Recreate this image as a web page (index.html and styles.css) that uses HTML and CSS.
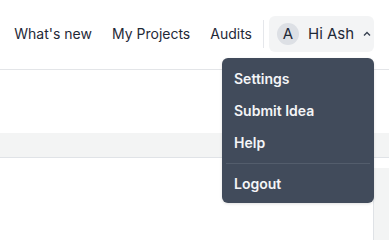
FILE: index.html
```html
<!doctype html>
<html lang="en">
  <head>
    <meta name="viewport" content="width=device-width">
    <title>Dashboard</title>

    <link rel="stylesheet" href="styles.css">
  </head>
  <body>
    <header id="top">
      <nav class="links">
        <a href="#">What's new</a>
        <a href="#">My Projects</a>
        <a href="#">Audits</a>
      </nav>
      <div class="sep"></div>
      <div class="user">
        <button class="user-btn">
          <span class="avatar">A</span>
          <span class="hi">Hi Ash</span>
          <svg class="chev" width="8" height="6" viewBox="0 0 8 6"><path d="M1 4.5 L4 1.5 L7 4.5" fill="none" stroke="#374151" stroke-width="1.4"/></svg>
        </button>
        <ul class="menu">
          <li><a href="#">Settings</a></li>
          <li><a href="#">Submit Idea</a></li>
          <li><a href="#">Help</a></li>
          <li class="divider"></li>
          <li><a href="#">Logout</a></li>
        </ul>
      </div>
    </header>

    <div class="gap"></div>
    <div class="band"></div>
    <main id="content">
      <div class="body"></div>
      <aside class="side"></aside>
    </main>
  </body>
</html>
```

FILE: styles.css
```css
* { box-sizing: border-box; }

html, body {
  margin: 0;
  font-family: Inter, "Noto Sans", sans-serif;
  font-size: 14px;
  color: #1f2937;
  background: #fff;
}

a { color: inherit; text-decoration: none; }

#top {
  height: 70px;
  display: flex;
  align-items: center;
  justify-content: flex-end;
  padding: 0 15px 2px 0;
  border-bottom: 1px solid #e3e5e8;
}

.links {
  display: flex;
  gap: 20px;
  margin-right: 11px;
}

.sep {
  width: 1px;
  height: 28px;
  background: #e5e7eb;
  margin-right: 5px;
}

.user { position: relative; }

.user-btn {
  display: flex;
  align-items: center;
  height: 36px;
  width: 105px;
  padding: 0 0 0 8px;
  border: none;
  border-radius: 6px;
  background: #f3f4f5;
  font: inherit;
  color: inherit;
  cursor: pointer;
}

.avatar {
  width: 22px;
  height: 22px;
  border-radius: 50%;
  background: #dde0e5;
  display: flex;
  align-items: center;
  justify-content: center;
  font-size: 15px;
  margin-right: 9px;
}

.hi { font-size: 15px; margin-right: 9px; }

.menu {
  position: absolute;
  top: 42px;
  right: 0;
  width: 152px;
  margin: 0;
  padding: 5px 0 3px;
  list-style: none;
  background: #414b5b;
  border-radius: 6px;
  box-shadow: 0 1px 3px rgba(0, 0, 0, 0.12);
  z-index: 10;
}

.menu a {
  display: block;
  height: 32px;
  line-height: 32px;
  padding: 0 12px;
  color: #f4f5f7;
  font-weight: 600;
}

.divider {
  height: 1px;
  margin: 4px 4px;
  background: #535d6c;
}

.gap { height: 63px; }

.band {
  height: 25px;
  background: #f3f4f4;
  border-bottom: 1px solid #e0e3e7;
}

#content {
  display: flex;
  padding-top: 10px;
}

.body { flex: 1; height: 80px; }

.side {
  width: 16px;
  height: 80px;
  background: #f3f4f4;
  border-left: 1px solid #dfe2e6;
}
```
